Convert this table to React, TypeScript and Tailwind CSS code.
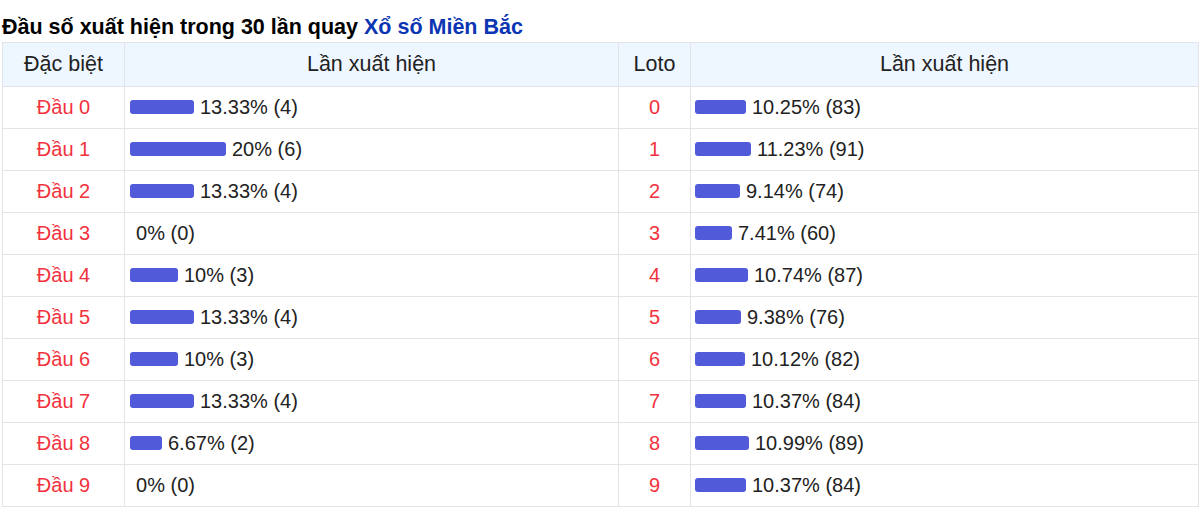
import React from "react";

const dacBiet = [
  { label: "Đầu 0", pct: 13.33, count: 4 },
  { label: "Đầu 1", pct: 20, count: 6 },
  { label: "Đầu 2", pct: 13.33, count: 4 },
  { label: "Đầu 3", pct: 0, count: 0 },
  { label: "Đầu 4", pct: 10, count: 3 },
  { label: "Đầu 5", pct: 13.33, count: 4 },
  { label: "Đầu 6", pct: 10, count: 3 },
  { label: "Đầu 7", pct: 13.33, count: 4 },
  { label: "Đầu 8", pct: 6.67, count: 2 },
  { label: "Đầu 9", pct: 0, count: 0 },
];

const loto = [
  { label: "0", pct: 10.25, count: 83 },
  { label: "1", pct: 11.23, count: 91 },
  { label: "2", pct: 9.14, count: 74 },
  { label: "3", pct: 7.41, count: 60 },
  { label: "4", pct: 10.74, count: 87 },
  { label: "5", pct: 9.38, count: 76 },
  { label: "6", pct: 10.12, count: 82 },
  { label: "7", pct: 10.37, count: 84 },
  { label: "8", pct: 10.99, count: 89 },
  { label: "9", pct: 10.37, count: 84 },
];

function Bar({ pct, count, scale }: { pct: number; count: number; scale: number }) {
  return (
    <div className="flex items-center">
      <span
        className="inline-block h-[14px] rounded-[3px] bg-[#515bd9] mr-[6px]"
        style={{ width: `${Math.round(pct * scale)}px` }}
      />
      <span>
        {pct}% ({count})
      </span>
    </div>
  );
}

export default function App() {
  return (
    <div className="w-[1200px] bg-white px-[2px] font-['Liberation_Sans',Arial,sans-serif] text-[#222]">
      <div className="h-[42px] pt-[15px] text-[21.5px] font-bold leading-[24px] text-black whitespace-nowrap">
        Đầu số xuất hiện trong 30 lần quay <span className="text-[#0b35b3]">Xổ số Miền Bắc</span>
      </div>
      <table className="w-[1196px] border-collapse text-[20px] leading-[26px] table-fixed">
        <colgroup>
          <col className="w-[122px]" />
          <col className="w-[494px]" />
          <col className="w-[72px]" />
          <col className="w-[508px]" />
        </colgroup>
        <thead>
          <tr className="h-[44px] bg-[#eef6ff] text-[21.5px]">
            <th className="border border-[#e2e4e8] pb-[1px] font-normal">Đặc biệt</th>
            <th className="border border-[#e2e4e8] pb-[1px] font-normal">Lần xuất hiện</th>
            <th className="border border-[#e2e4e8] pb-[1px] font-normal">Loto</th>
            <th className="border border-[#e2e4e8] pb-[1px] font-normal">Lần xuất hiện</th>
          </tr>
        </thead>
        <tbody>
          {dacBiet.map((row, i) => (
            <tr key={row.label} className="h-[42px]">
              <td className="border border-[#e2e4e8] pb-[2px] text-center text-[#f2323c]">{row.label}</td>
              <td className="border border-[#e2e4e8] pb-[2px] pl-[5px]">
                <Bar pct={row.pct} count={row.count} scale={4.8} />
              </td>
              <td className="border border-[#e2e4e8] pb-[2px] text-center text-[#f2323c]">{loto[i].label}</td>
              <td className="border border-[#e2e4e8] pb-[2px] pl-[4px]">
                <Bar pct={loto[i].pct} count={loto[i].count} scale={4.95} />
              </td>
            </tr>
          ))}
        </tbody>
      </table>
    </div>
  );
}
